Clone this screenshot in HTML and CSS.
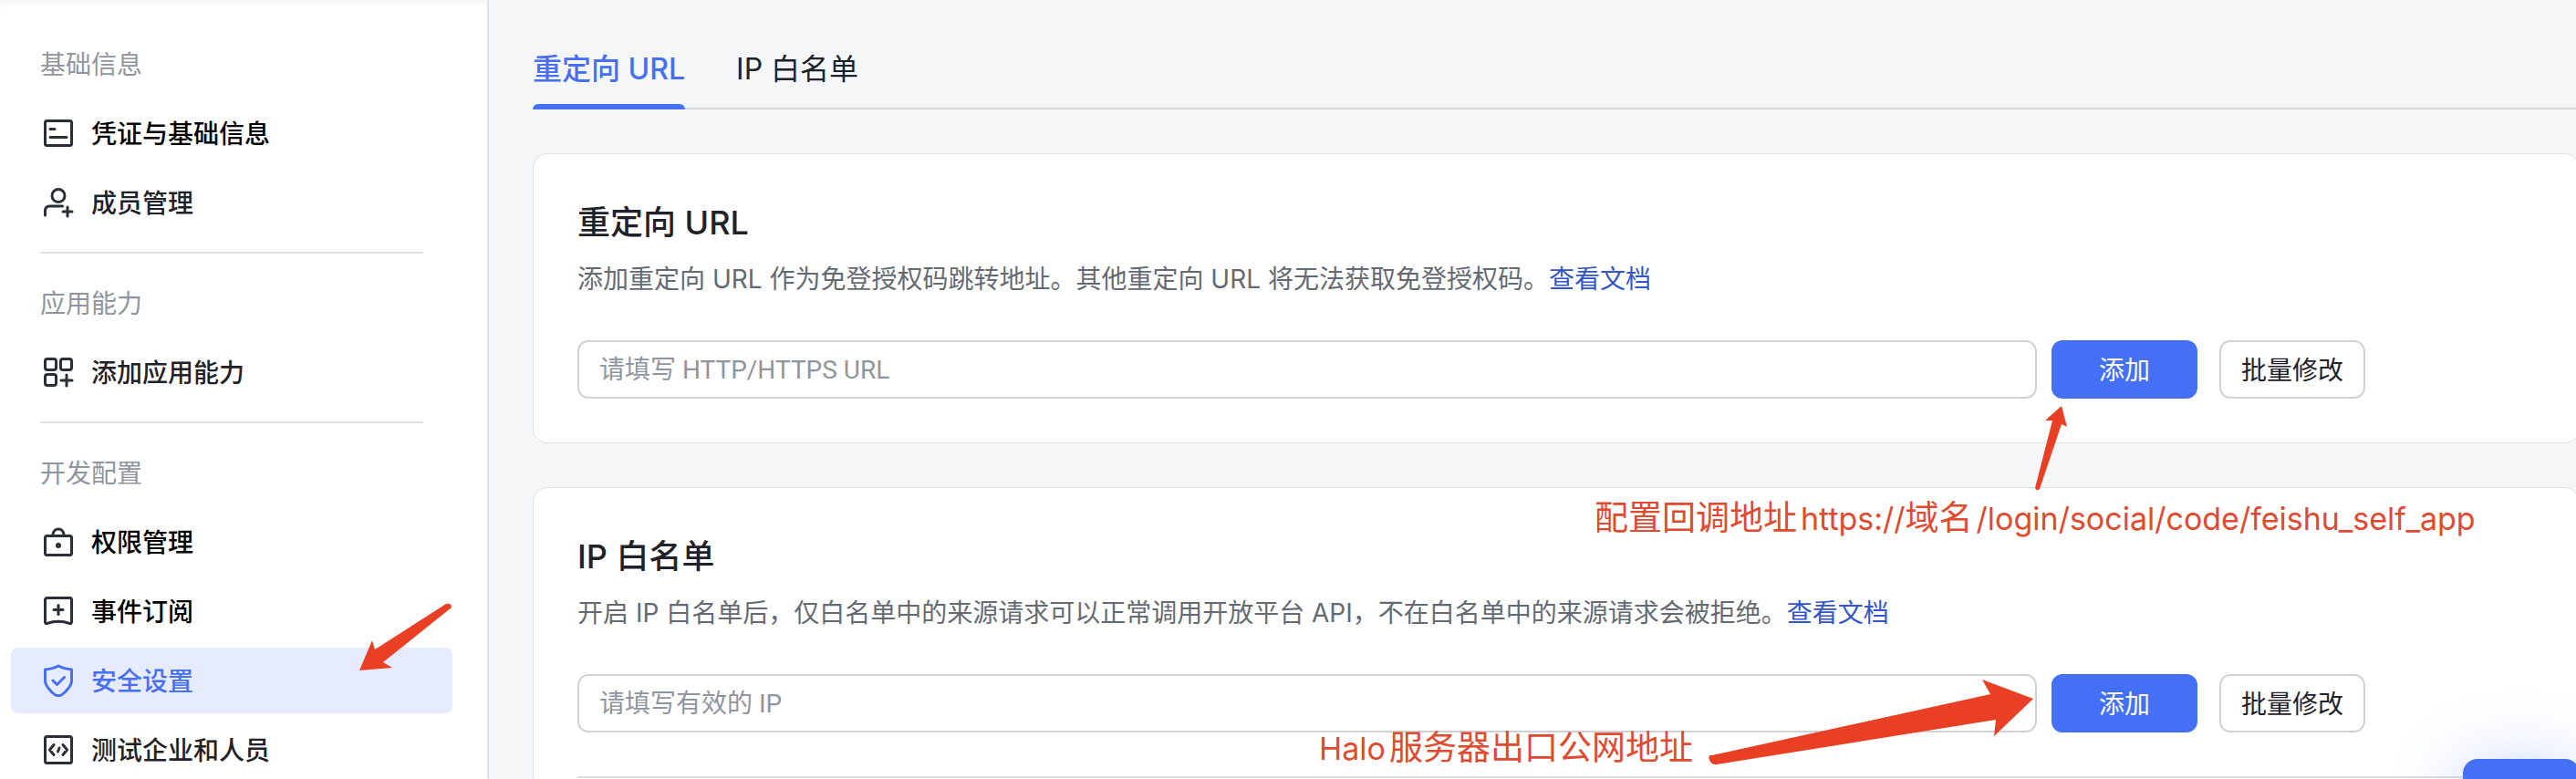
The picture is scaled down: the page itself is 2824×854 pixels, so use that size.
FILE: index.html
```html
<!DOCTYPE html>
<html lang="zh-CN">
<head>
    <meta charset="UTF-8">
    <meta name="viewport" content="width=device-width, initial-scale=1.0">
    <title>安全设置</title>
    <link rel="stylesheet" href="styles.css">
</head>
<body>
    <div class="page">
        <nav class="sidebar">
            <h2 class="group-title">基础信息</h2>
            <ul class="menu">
                <li><a class="item strong" href="#">
                    <svg class="icon" viewBox="0 0 36 36"><rect x="3.5" y="4.5" width="29" height="27" rx="2"/><path d="M9 13.500h5M9 22.500h18"/></svg>
                    <span>凭证与基础信息</span></a></li>
                <li><a class="item" href="#">
                    <svg class="icon" viewBox="0 0 36 36"><circle cx="18" cy="10.500" r="7"/><path d="M3.500 32v-5.500a4.500 4.500 0 0 1 4.500-4.500h14.500M23 28h10M28 23v10"/></svg>
                    <span>成员管理</span></a></li>
            </ul>

            <h2 class="group-title">应用能力</h2>
            <ul class="menu">
                <li><a class="item" href="#">
                    <svg class="icon" viewBox="0 0 36 36"><rect x="3.5" y="3.5" width="12" height="12" rx="2.5"/><rect x="20.5" y="3.5" width="12" height="12" rx="2.5"/><rect x="3.5" y="20.5" width="12" height="12" rx="2.5"/><path d="M21 27h12M27 21v12"/></svg>
                    <span>添加应用能力</span></a></li>
            </ul>

            <h2 class="group-title">开发配置</h2>
            <ul class="menu">
                <li><a class="item strong" href="#">
                    <svg class="icon" viewBox="0 0 36 36"><rect x="3.5" y="11.5" width="29" height="21" rx="2"/><path d="M12 11v-1a6 6 0 0 1 12 0v1"/><circle class="dot" cx="18" cy="22" r="3"/></svg>
                    <span>权限管理</span></a></li>
                <li><a class="item strong" href="#">
                    <svg class="icon" viewBox="0 0 36 36"><path d="M5.500 3.500h25a2 2 0 0 1 2 2v24.500c0 1-1 2-2 1.500C22 28.500 14 28.500 5.500 31.500c-1 .5-2-.5-2-1.500V5.500a2 2 0 0 1 2-2zM13 16.500h10M18 11.500v10"/></svg>
                    <span>事件订阅</span></a></li>
                <li><a class="item active" href="#">
                    <svg class="icon" viewBox="0 0 36 36"><path d="M18 2c4.500 2.500 9.500 3.500 14.500 4v12.500c0 5-7 13-11 15.300q-3.500 1.500-7 0C10.500 31.500 3.500 23.500 3.500 18.500V6c5-.5 10-1.500 14.500-4zM12 18l4.500 4.500 8-8"/></svg>
                    <span>安全设置</span></a></li>
                <li><a class="item" href="#">
                    <svg class="icon" viewBox="0 0 36 36"><rect x="3.5" y="3.5" width="29" height="29" rx="2"/><path d="M13 12.500L8.500 18l4.500 5.500M23 12.500l4.500 5.500-4.500 5.500M19 16l-1.500 4"/></svg>
                    <span>测试企业和人员</span></a></li>
            </ul>
        </nav>

        <main class="content">
            <div class="tabs">
                <button class="tab current" type="button">重定向 URL</button>
                <button class="tab" type="button">IP 白名单</button>
            </div>

            <section class="card">
                <h3 class="card-title">重定向 URL</h3>
                <p class="desc">添加重定向 URL 作为免登授权码跳转地址。其他重定向 URL 将无法获取免登授权码。<a href="#">查看文档</a></p>
                <form class="row">
                    <input class="field" type="text" aria-label="重定向 URL" placeholder="请填写 HTTP/HTTPS URL">
                    <div class="actions">
                        <button class="btn primary" type="button">添加</button>
                        <button class="btn" type="button">批量修改</button>
                    </div>
                </form>
            </section>

            <section class="card">
                <h3 class="card-title">IP 白名单</h3>
                <p class="desc">开启 IP 白名单后，仅白名单中的来源请求可以正常调用开放平台 API，不在白名单中的来源请求会被拒绝。<a href="#">查看文档</a></p>
                <form class="row">
                    <input class="field" type="text" aria-label="IP 白名单" placeholder="请填写有效的 IP">
                    <div class="actions">
                        <button class="btn primary" type="button">添加</button>
                        <button class="btn" type="button">批量修改</button>
                    </div>
                </form>
                <hr class="line">
            </section>
        </main>
    </div>

    <button class="help" type="button" aria-label="帮助">
        <svg viewBox="0 0 48 48"><circle cx="24" cy="24" r="18"/><path d="M18 20a6 6 0 1 1 6 6v4"/></svg>
    </button>

    <!-- notes -->
    <p class="note note-url">配置回调地址<span>https://</span>域名<span>/login/social/code/feishu_self_app</span></p>
    <p class="note note-ip"><span>Halo</span>服务器出口公网地址</p>
    <svg class="arrow arrow-menu" viewBox="0 0 104 76"><path d="M2 75L16 42l3 10L97 2q6-1 6 4L28 66l10 6z"/></svg>
    <svg class="arrow arrow-add" viewBox="0 0 40 96"><path d="M32 1l6 23-6-3L8 92q-3 3-5-1L22 17h-8z"/></svg>
    <svg class="arrow arrow-ip" viewBox="0 0 360 96"><path d="M357 22L314 63l2-18L10 94q-6 1-8-5t3-5L310 17l-9-16z"/></svg>
</body>
</html>
```

FILE: styles.css
```css
*{
    box-sizing: border-box;
}
body{
    margin: 0;
    position: relative;
    background: #f5f6f7;
    color: #1f2329;
    font-family: Inter, "Noto Sans CJK SC", sans-serif;
    font-size: 28px;
    height: 100vh;
    overflow: hidden;
}
h2, h3, p, ul{
    margin: 0;
    padding: 0;
    font-weight: 400;
}
ul{
    list-style: none;
}
a{
    text-decoration: none;
}
button, input{
    font-family: inherit;
}
.page{
    display: flex;
    height: 100%;
    overflow: hidden;
}

/* sidebar */
.sidebar{
    flex: 0 0 536px;
    padding: 50px 38px 0 12px;
    background: #fff;
    border-right: 2px solid #dee0e3;
    box-shadow: inset 0 10px 12px -10px rgba(0,0,0,.08);
}
.group-title{
    margin: 0 32px 18px;
    font-size: 28px;
    line-height: 42px;
    color: #8f959e;
}
.menu{
    display: flex;
    flex-direction: column;
    gap: 4px;
}
.menu + .group-title{
    margin-top: 18px;
    padding-top: 34px;
    border-top: 2px solid #dee0e3;
}
.item{
    display: flex;
    align-items: center;
    gap: 18px;
    height: 72px;
    padding: 0 34px;
    border-radius: 8px;
    color: #1f2329;
    font-weight: 500;
}
.item span{
    padding-bottom: 2px;
}
.item.strong{
    color: #000;
}
.item.active{
    background: #e6ecfd;
    color: #4670f0;
}
.icon{
    width: 36px;
    height: 36px;
    fill: none;
    stroke: #2b2f36;
    stroke-width: 3;
    stroke-linecap: round;
    stroke-linejoin: round;
}
.active .icon{
    stroke: #4670f0;
}
.icon .dot{
    fill: #2b2f36;
    stroke: none;
}

/* content */
.content{
    flex: 1;
    min-width: 0;
    padding-left: 48px;
}
.tabs{
    display: flex;
    gap: 56px;
    height: 120px;
    border-bottom: 2px solid #d5d7da;
}
.tab{
    position: relative;
    height: 120px;
    padding: 26px 0 0;
    border: 0;
    background: none;
    font-size: 32px;
    color: #1f2329;
}
.tab.current{
    color: #4670f0;
    font-weight: 500;
}
.tab.current::after{
    content: "";
    position: absolute;
    left: 0;
    right: 0;
    bottom: 0;
    height: 6px;
    border-radius: 6px 6px 0 0;
    background: #4370f5;
}
.card{
    margin: 48px -4px 0 0;
    padding: 48px;
    border: 1px solid #dee0e3;
    border-radius: 16px;
    background: #fff;
}
.card-title{
    font-size: 36px;
    line-height: 54px;
    font-weight: 500;
}
.desc{
    margin: 12px 0 44px;
    line-height: 46px;
    color: #646a73;
}
.desc a{
    color: #3355c8;
}
.row{
    display: flex;
    gap: 16px;
}
.field{
    flex: 0 1 1600px;
    min-width: 0;
    height: 64px;
    padding: 0 22px;
    border: 2px solid #d0d3d6;
    border-radius: 12px;
    background: #fff;
    font-family: Roboto, "Noto Sans CJK SC", sans-serif;
    font-size: 28px;
}
.field::placeholder{
    color: #8f959e;
}
.actions{
    display: flex;
    gap: 24px;
}
.btn{
    width: 160px;
    height: 64px;
    padding: 0 0 2px;
    border: 2px solid #d0d3d6;
    border-radius: 12px;
    background: #fff;
    color: #1f2329;
    font-size: 28px;
}
.btn.primary{
    border-color: #4370f5;
    background: #4370f5;
    color: #fff;
}
.line{
    margin: 48px 0 0;
    border: 0;
    border-top: 2px solid #dee0e3;
}

/* floating help button, partly off screen */
.help{
    position: absolute;
    top: 832px;
    right: -4px;
    width: 128px;
    height: 128px;
    padding: 16px 0 0;
    border: 0;
    border-radius: 16px;
    background: #4370f5;
    box-shadow: 0 8px 80px rgba(67,112,245,.3);
}
.help svg{
    display: block;
    width: 48px;
    height: 48px;
    margin: 0 auto 48px;
    fill: none;
    stroke: #fff;
    stroke-width: 4;
}

/* notes and arrows over the page */
.note{
    position: absolute;
    font-size: 37px;
    line-height: 48px;
    color: #e04a30;
    white-space: nowrap;
}
.note span{
    font-size: 34px;
}
.note-url{
    top: 544px;
    left: 1748px;
}
.note-url span{
    margin-left: 4px;
}
.note-ip{
    top: 796px;
    left: 1446px;
}
.note-ip span{
    margin-right: 4px;
}
.arrow{
    position: absolute;
    fill: #e94025;
}
.arrow-menu{
    top: 660px;
    left: 392px;
    width: 104px;
}
.arrow-add{
    top: 444px;
    left: 2228px;
    width: 40px;
}
.arrow-ip{
    top: 744px;
    left: 1872px;
    width: 360px;
}
```
